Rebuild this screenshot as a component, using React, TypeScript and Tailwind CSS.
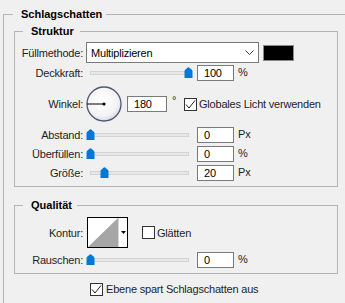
import React from 'react';

const Thumb: React.FC<{ pos: number }> = ({ pos }) => (
  <svg
    className="absolute top-[2px]"
    style={{ left: `${pos * 98}px` }}
    width="9"
    height="11"
    viewBox="0 0 9 11"
  >
    <path d="M0.5 11V4.2Q0.5 3.4 1.2 2.8L3.8 0.6Q4.5 0 5.2 0.6L7.8 2.8Q8.5 3.4 8.5 4.2V11Z" fill="#0078d7" />
  </svg>
);

const Slider: React.FC<{ pos: number }> = ({ pos }) => (
  <div className="relative flex h-[16px] w-[106px] shrink-0 items-center">
    <div className="ml-[4px] h-[4px] w-[99px] border border-[#d3d3d3] bg-[#e7e7e7]" />
    <Thumb pos={pos} />
  </div>
);

const Field: React.FC<{ value: string; w?: string }> = ({ value, w = 'w-[37px]' }) => (
  <div className={`${w} flex h-[16px] shrink-0 items-center border border-[#7a7a7a] bg-white pl-[6px] text-[11px] leading-[14px] text-black`}>
    {value}
  </div>
);

const Check: React.FC<{ checked: boolean }> = ({ checked }) => (
  <div className="flex h-[13px] w-[13px] shrink-0 items-center justify-center border border-[#333333] bg-white">
    {checked && (
      <svg width="11" height="11" viewBox="0 0 11 11">
        <path d="M1 5.5L4 9L10 1.5" fill="none" stroke="#222" strokeWidth="1" />
      </svg>
    )}
  </div>
);

const Label: React.FC<{ text: string }> = ({ text }) => (
  <div className="w-[68px] shrink-0 text-right">{text}</div>
);

const SliderRow: React.FC<{ label: string; value: string; unit: string; pos: number; className: string }> = ({
  label,
  value,
  unit,
  pos,
  className,
}) => (
  <div className={`flex h-[16px] items-center ${className}`}>
    <Label text={label} />
    <div className="ml-[3px] flex items-center">
      <Slider pos={pos} />
      <div className="ml-[5px]">
        <Field value={value} />
      </div>
      <span className="ml-[4px] -mt-[3px]">{unit}</span>
    </div>
  </div>
);

const Dial: React.FC = () => (
  <svg width="36" height="36" viewBox="0 0 36 36" className="shrink-0">
    <defs>
      <radialGradient id="dialFill" cx="45%" cy="40%" r="60%">
        <stop offset="0%" stopColor="#ffffff" />
        <stop offset="75%" stopColor="#f3f3f5" />
        <stop offset="100%" stopColor="#d9dbe3" />
      </radialGradient>
    </defs>
    <circle cx="18" cy="18" r="17" fill="url(#dialFill)" stroke="#4f5873" strokeWidth="1.3" />
    <line x1="1" y1="18" x2="18" y2="18" stroke="#000" strokeWidth="1" />
    <circle cx="18" cy="18" r="1.6" fill="#000" />
  </svg>
);

const Contour: React.FC = () => (
  <div className="flex h-[31px] w-[41px] shrink-0 border border-black bg-white">
    <svg width="30" height="29" viewBox="0 0 30 29" className="shrink-0">
      <polygon points="0,29 30,0 30,29" fill="#a6a6a6" />
    </svg>
    <div className="flex flex-1 items-center justify-center border-l border-[#d6d6d6]">
      <svg width="5" height="3" viewBox="0 0 5 3">
        <polygon points="0,0 5,0 2.5,3" fill="#000" />
      </svg>
    </div>
  </div>
);

export default function App() {
  return (
    <div className="h-[303px] w-[345px] overflow-hidden bg-[#f0f0f0] pl-[3px] pt-[6px] font-['Liberation_Sans',Arial,sans-serif] text-[11px] leading-[14px] tracking-[-0.2px] text-[#1e1e1e]">
      <fieldset className="m-0 h-[340px] w-[400px] border border-[#b4b4b4] p-0">
        <legend className="ml-[9px] pl-[8px] pr-[4px] text-[11px] font-bold leading-[16px] tracking-normal text-black">
          Schlagschatten
        </legend>
        <div className="pl-[10px] pt-[1px]">
          <fieldset className="m-0 w-[324px] border border-[#b4b4b4] p-0 pb-[5px]">
            <legend className="ml-[8px] pl-[8px] pr-[6px] text-[11px] font-bold leading-[16px] tracking-normal text-black">
              Struktur
            </legend>

            <div className="mt-[3px] flex h-[21px] items-center">
              <Label text="Füllmethode:" />
              <div className="ml-[3px] flex h-[21px] w-[173px] items-center justify-between border border-[#7a7a7a] bg-white pl-[4px] pr-[4px] text-black">
                <span>Multiplizieren</span>
                <svg width="9" height="5" viewBox="0 0 9 5">
                  <path d="M0.5 0.5L4.5 4.5L8.5 0.5" fill="none" stroke="#3a3a3a" strokeWidth="1" />
                </svg>
              </div>
              <div className="ml-[4px] h-[16px] w-[31px] border border-[#8a8a8a] bg-black" />
            </div>

            <SliderRow className="mt-[2px]" label="Deckkraft:" value="100" unit="%" pos={1} />

            <div className="mt-[5px] flex h-[36px] items-center">
              <Label text="Winkel:" />
              <div className="ml-[3px] flex items-center">
                <Dial />
                <div className="ml-[5px]">
                  <Field value="180" w="w-[40px]" />
                </div>
                <span className="w-[17px] -mt-[8px] pl-[5px]">°</span>
                <Check checked />
                <span className="ml-[2px]">Globales Licht verwenden</span>
              </div>
            </div>

            <SliderRow className="mt-[5px]" label="Abstand:" value="0" unit="Px" pos={0} />
            <SliderRow className="mt-[3px]" label="Überfüllen:" value="0" unit="%" pos={0} />
            <SliderRow className="mt-[3px]" label="Größe:" value="20" unit="Px" pos={0.143} />
          </fieldset>

          <fieldset className="m-0 mt-[10px] w-[324px] border border-[#b4b4b4] p-0 pb-[5px]">
            <legend className="ml-[8px] pl-[8px] pr-[5px] text-[11px] font-bold leading-[16px] tracking-normal text-black">
              Qualität
            </legend>
            <div className="mt-[4px] flex h-[31px] items-center">
              <Label text="Kontur:" />
              <div className="ml-[4px] flex items-center">
                <Contour />
                <div className="ml-[14px]">
                  <Check checked={false} />
                </div>
                <span className="ml-[2px]">Glätten</span>
              </div>
            </div>
            <SliderRow className="mt-[4px]" label="Rauschen:" value="0" unit="%" pos={0} />
          </fieldset>

          <div className="ml-[76px] mt-[8px] flex h-[14px] items-center">
            <Check checked />
            <span className="ml-[3px]">Ebene spart Schlagschatten aus</span>
          </div>
        </div>
      </fieldset>
    </div>
  );
}
